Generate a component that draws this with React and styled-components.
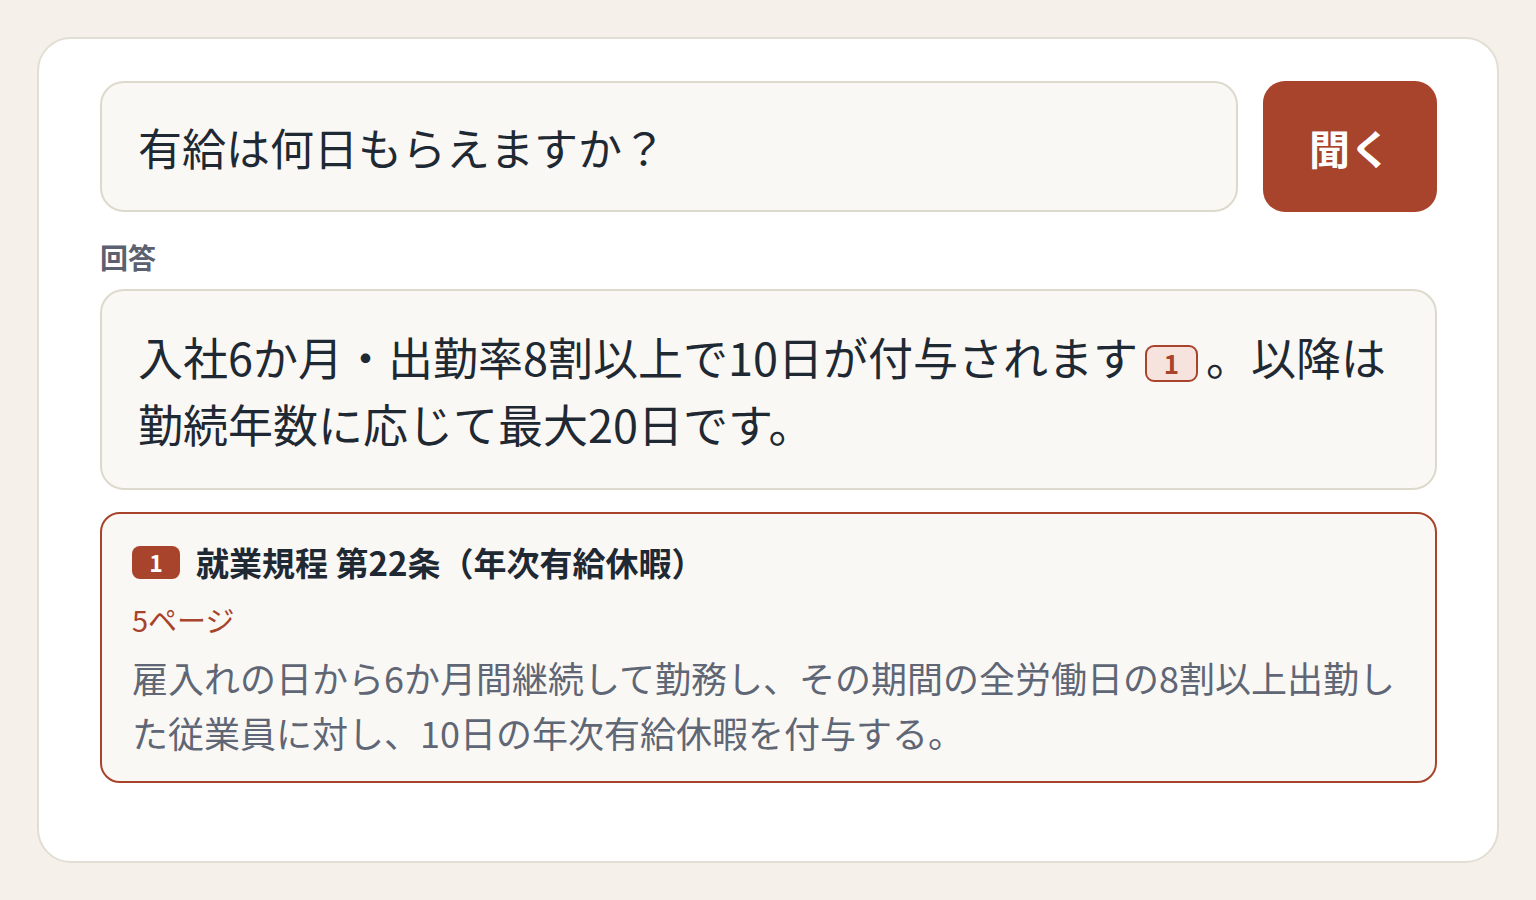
import React, { useState } from 'react';
import styled, { createGlobalStyle } from 'styled-components';

const GlobalStyle = createGlobalStyle`
	html, body {
		margin: 0;
		padding: 0;
		background-color: #f5f1ea;
		font-family: 'Noto Sans CJK JP', 'Noto Sans', sans-serif;
	}
	* {
		box-sizing: border-box;
	}
`;

const Page = styled.div`
	padding: 37px;
	min-height: 100vh;
`;

const Card = styled.div`
	background-color: #fff;
	border: 2px solid #e2ded3;
	border-radius: 34px;
	padding: 42px 60px 78px 61px;
	display: flex;
	flex-direction: column;
`;

const SearchRow = styled.form`
	display: flex;
	gap: 25px;
`;

const Input = styled.input`
	flex: 1;
	height: 131px;
	padding: 0 36px;
	border: 2px solid #ddd9cc;
	border-radius: 24px;
	background-color: #faf8f4;
	color: #1f2933;
	font-family: inherit;
	font-size: 44px;
	outline: none;
`;

const AskButton = styled.button`
	width: 174px;
	height: 131px;
	border: none;
	border-radius: 22px;
	background-color: #a8432c;
	color: #fff;
	font-family: inherit;
	font-size: 41px;
	font-weight: 700;
	cursor: pointer;
`;

const Label = styled.div`
	margin: 24px 0 11px;
	font-size: 28px;
	line-height: 42px;
	font-weight: 700;
	color: #5b6170;
`;

const AnswerBox = styled.div`
	padding: 32px 36px 31px;
	border: 2px solid #ddd9cc;
	border-radius: 24px;
	background-color: #faf8f4;
	color: #1f2933;
	font-size: 45px;
	line-height: 67px;
`;

const RefMark = styled.span`
	display: inline-flex;
	align-items: center;
	justify-content: center;
	width: 53px;
	height: 37px;
	margin: 0 8px 0 7px;
	vertical-align: 2px;
	border: 2px solid #a8432c;
	border-radius: 9px;
	background-color: #f6e3de;
	color: #a8432c;
	font-size: 26px;
	font-weight: 700;
	line-height: 1;
`;

const Source = styled.div`
	margin-top: 22px;
	padding: 24px 30px 21px;
	border: 2px solid #a8432c;
	border-radius: 20px;
	background-color: #faf8f4;
	display: flex;
	flex-direction: column;
	gap: 10px;
`;

const SourceHead = styled.div`
	display: flex;
	align-items: center;
	gap: 16px;
	height: 48px;
`;

const Num = styled.span`
	display: inline-flex;
	align-items: center;
	justify-content: center;
	width: 48px;
	height: 33px;
	border-radius: 8px;
	background-color: #a8432c;
	color: #fff;
	font-size: 23px;
	font-weight: 700;
`;

const SourceTitle = styled.span`
	font-size: 33px;
	font-weight: 700;
	color: #1f2933;
`;

const PageNo = styled.div`
	margin-top: 2px;
	font-size: 29px;
	line-height: 42px;
	color: #a8432c;
`;

const Excerpt = styled.div`
	font-size: 36px;
	line-height: 55px;
	color: #5f6675;
`;

const App = () => {
	const [question, setQuestion] = useState('有給は何日もらえますか？');

	return (
		<Page>
			<GlobalStyle />
			<Card>
				<SearchRow onSubmit={(e) => e.preventDefault()}>
					<Input value={question} onChange={(e) => setQuestion(e.target.value)} />
					<AskButton type='submit'>聞く</AskButton>
				</SearchRow>

				<Label>回答</Label>
				<AnswerBox>
					入社6か月・出勤率8割以上で10日が付与されます<RefMark>1</RefMark>。以降は勤続年数に応じて最大20日です。
				</AnswerBox>

				<Source>
					<SourceHead>
						<Num>1</Num>
						<SourceTitle>就業規程 第22条（年次有給休暇）</SourceTitle>
					</SourceHead>
					<PageNo>5ページ</PageNo>
					<Excerpt>
						雇入れの日から6か月間継続して勤務し、その期間の全労働日の8割以上出勤した従業員に対し、10日の年次有給休暇を付与する。
					</Excerpt>
				</Source>
			</Card>
		</Page>
	);
};

export default App;
